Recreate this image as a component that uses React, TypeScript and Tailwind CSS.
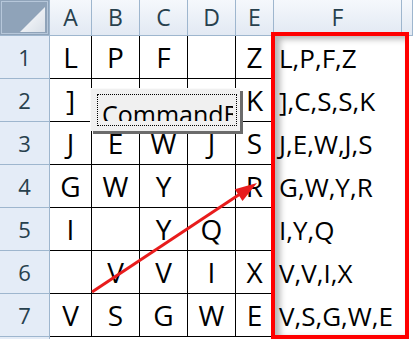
import React from "react";

const cols = ["A", "B", "C", "D", "E", "F", ""];
const data: string[][] = [
  ["L", "P", "F", "", "Z"],
  ["]", "", "", "", "K"],
  ["J", "E", "W", "J", "S"],
  ["G", "W", "Y", "", "R"],
  ["I", "", "Y", "Q", ""],
  ["", "V", "V", "I", "X"],
  ["V", "S", "G", "W", "E"],
];
const fcol = ["L,P,F,Z", "],C,S,S,K", "J,E,W,J,S", "G,W,Y,R", "I,Y,Q", "V,V,I,X", "V,S,G,W,E"];

const font = { fontFamily: '"Open Sans", "Noto Sans", sans-serif' };

export default function App() {
  return (
    <div className="relative w-[413px] h-[339px] overflow-hidden bg-white" style={font}>
      <div className="grid grid-cols-[50px_42px_48px_48px_48px_38px_128px_1fr] grid-rows-[36px_repeat(8,43px)]">
        {/* corner */}
        <div className="relative border-r border-b border-[#9eb6ce] bg-[#8fa3b9]">
          <div className="absolute inset-[1px] border border-[#b6c7da]" />
          <svg className="absolute left-0 top-0" width="50" height="36">
            <defs>
              <linearGradient id="tri" x1="0" y1="0" x2="1" y2="1">
                <stop offset="0" stopColor="#ffffff" />
                <stop offset="1" stopColor="#d8dfe8" />
              </linearGradient>
            </defs>
            <polygon points="20,32 45,32 45,7" fill="url(#tri)" />
          </svg>
        </div>
        {cols.map((c, i) => (
          <div
            key={"h" + i}
            className="flex items-center justify-center border-r border-b border-[#9eb6ce] bg-gradient-to-b from-[#f5f8fc] to-[#e2e9f3] text-[23px] text-[#27404d] leading-none"
          >
            {c}
          </div>
        ))}
        {Array.from({ length: 8 }).map((_, r) => (
          <React.Fragment key={"r" + r}>
            <div className="flex items-center justify-center border-r border-b border-[#9eb6ce] bg-[#e4ecf7] text-[22px] text-[#27404d] leading-none">
              {r < 7 ? r + 1 : ""}
            </div>
            {[0, 1, 2, 3, 4].map((ci) => (
              <div
                key={ci}
                className={
                  "flex items-center justify-center text-[28px] leading-none text-black " +
                  (r < 7 ? "border-r border-b border-black" : "")
                }
              >
                {r < 7 ? data[r][ci] : ""}
              </div>
            ))}
            <div className="flex items-center pl-[5px] text-[26px] leading-none text-black whitespace-nowrap">
              {r < 7 ? fcol[r] : ""}
            </div>
            <div />
          </React.Fragment>
        ))}
      </div>

      {/* Command button */}
      <div className="absolute left-[90px] top-[88px] w-[150px] h-[43px] bg-[#f0f0f0] border-t border-l border-[#fafafa] shadow-[3px_3px_0_#6b6b6b]">
        <div className="absolute left-[6px] top-[5px] right-[3px] bottom-[5px] border border-dotted border-black" />
        <div className="absolute left-[11px] top-[13px] right-[7px] h-[19px] overflow-hidden">
          <div className="text-[25px] leading-none whitespace-nowrap text-black">CommandButton1</div>
        </div>
      </div>

      {/* red box */}
      <div className="absolute left-[271px] top-[32px] w-[138px] h-[307px] border-4 border-[#ff0000] shadow-[inset_5px_3px_6px_rgba(0,0,0,0.3)] pointer-events-none" />

      {/* arrow */}
      <svg className="absolute left-0 top-0 pointer-events-none" width="413" height="339">
        <line x1="92" y1="292" x2="243" y2="192" stroke="#e81c1c" strokeWidth="3" />
        <polygon points="257,183 242.5,201 234.8,189.3" fill="#e81c1c" />
      </svg>
    </div>
  );
}
